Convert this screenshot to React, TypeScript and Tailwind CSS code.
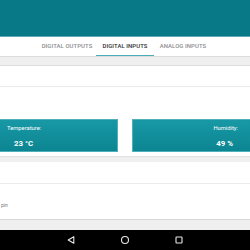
import React from "react";

export default function App() {
  const font = { fontFamily: "Roboto, 'Noto Sans', sans-serif" };
  return (
    <div className="w-[250px] h-[250px] overflow-hidden flex flex-col bg-[#eeeeee]" style={font}>
      {/* header */}
      <div className="h-[37px] shrink-0 bg-[#087a87] border-b border-[#5fa9b1]" />
      {/* tabs */}
      <div className="h-[20px] shrink-0 bg-white flex justify-center border-b border-[#dcdcdc]">
        <div className="w-[58px] flex items-center justify-center text-[5.9px] font-medium text-[#8c8c8c] tracking-[0.1px]">
          DIGITAL OUTPUTS
        </div>
        <div className="w-[58px] flex flex-col">
          <div className="flex-1 flex items-center justify-center text-[5.9px] font-medium text-[#2d2d2d] tracking-[0.1px]">
            DIGITAL INPUTS
          </div>
          <div className="h-[1px] bg-[#4aaebb]" />
        </div>
        <div className="w-[58px] flex items-center justify-center text-[5.9px] font-medium text-[#8c8c8c] tracking-[0.1px]">
          ANALOG INPUTS
        </div>
      </div>
      {/* grey gap */}
      <div className="h-[9px] shrink-0 bg-[#efefef] border-b border-[#dedede]" />
      {/* white section */}
      <div className="h-[21px] shrink-0 bg-white border-b border-[#ececec]" />
      <div className="h-[69px] shrink-0 bg-white pt-[32px] pb-[4px]">
        <div className="flex gap-[14px] h-[33px]">
          <div className="w-[118px] bg-gradient-to-b from-[#1898a5] to-[#0c8592] border border-l-0 border-[#4fb0ba] flex flex-col">
            <div className="pl-[7px] pt-[6px] text-[5.8px] text-white leading-none">Temperature:</div>
            <div className="pl-[14px] pt-[8px] text-[7.8px] font-bold text-white leading-none">23 °C</div>
          </div>
          <div className="flex-1 bg-gradient-to-b from-[#1898a5] to-[#0c8592] border border-r-0 border-[#4fb0ba] flex flex-col items-end">
            <div className="pr-[12px] pt-[6px] text-[5.8px] text-white leading-none">Humidity:</div>
            <div className="pr-[17px] pt-[8px] text-[7.8px] font-bold text-white leading-none">49 %</div>
          </div>
        </div>
      </div>
      <div className="h-[6px] shrink-0 bg-[#f0f0f0] border-t border-[#e2e2e2]" />
      <div className="h-[22px] shrink-0 bg-white border-b border-[#ececec]" />
      <div className="h-[35px] shrink-0 bg-white flex items-start">
        <div className="pt-[19px] pl-[1px] text-[5px] text-[#777777] leading-none">pin</div>
      </div>
      <div className="h-[11px] shrink-0 bg-[#efefef] border-t border-[#d8d8d8]" />
      {/* nav bar */}
      <div className="h-[20px] shrink-0 bg-black flex items-center justify-center gap-[40px]">
        <svg width="14" height="14" viewBox="0 0 14 14">
          <path d="M9.8 3.7 L9.8 10.3 L4.2 7 Z" fill="none" stroke="#e8e8e8" strokeWidth="1.1" strokeLinejoin="round" />
        </svg>
        <svg width="14" height="14" viewBox="0 0 14 14">
          <circle cx="7" cy="7" r="3.5" fill="none" stroke="#e8e8e8" strokeWidth="1.1" />
        </svg>
        <svg width="14" height="14" viewBox="0 0 14 14">
          <rect x="4" y="4" width="6" height="6" rx="0.6" fill="none" stroke="#e8e8e8" strokeWidth="1.1" />
        </svg>
      </div>
    </div>
  );
}
